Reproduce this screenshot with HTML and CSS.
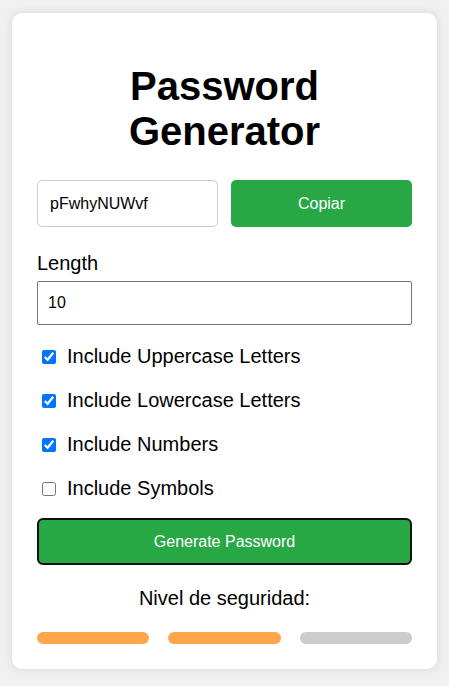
FILE: index.html
```html
<!DOCTYPE html>
<html lang="es">
<head>
<meta charset="utf-8">
<title>Password Generator</title>
<link rel="stylesheet" href="styles.css">
</head>
<body>
<main class="card">
  <h1 class="title">Password Generator</h1>
  <div class="output-row">
    <input class="output" type="text" value="pFwhyNUWvf" readonly>
    <button class="btn copy" type="button">Copiar</button>
  </div>
  <label class="field-label" for="length">Length</label>
  <input class="length" id="length" type="number" value="10">
  <div class="options">
    <label class="option"><input type="checkbox" checked><span>Include Uppercase Letters</span></label>
    <label class="option"><input type="checkbox" checked><span>Include Lowercase Letters</span></label>
    <label class="option"><input type="checkbox" checked><span>Include Numbers</span></label>
    <label class="option"><input type="checkbox"><span>Include Symbols</span></label>
  </div>
  <button class="btn generate" type="button">Generate Password</button>
  <p class="strength-label">Nivel de seguridad:</p>
  <div class="strength">
    <span class="bar on"></span>
    <span class="bar on"></span>
    <span class="bar"></span>
  </div>
</main>
</body>
</html>
```
FILE: styles.css
```css
* { box-sizing: border-box; }
html, body {
  margin: 0;
  background: #f0f0f0;
}
body {
  padding: 13px 12px;
  font-family: "Liberation Sans", Arial, sans-serif;
  color: #000;
}
.card {
  background: #fff;
  border-radius: 10px;
  box-shadow: 0 0 10px rgba(0, 0, 0, 0.1);
  padding: 24px 25px 25px;
  display: flex;
  flex-direction: column;
}
.title {
  font-size: 40px;
  line-height: 45px;
  font-weight: bold;
  text-align: center;
  margin: 27px 0 26px;
}
.output-row {
  display: grid;
  grid-template-columns: minmax(0, 1fr) minmax(0, 1fr);
  gap: 13px;
  height: 47px;
}
.output {
  width: 100%;
  min-width: 0;
  border: 1px solid #ccc;
  border-radius: 5px;
  padding: 0 12px;
  font: 16px "Liberation Sans", Arial, sans-serif;
  color: #000;
  outline: none;
}
.btn {
  border: none;
  border-radius: 5px;
  background: #28a745;
  color: #fff;
  font: 16px "Liberation Sans", Arial, sans-serif;
  cursor: pointer;
}
.copy { width: 100%; }
.field-label {
  font-size: 20px;
  line-height: 23px;
  margin-top: 25px;
}
.length {
  margin-top: 6px;
  height: 44px;
  border: 1px solid #767676;
  border-radius: 2px;
  padding: 0 10px;
  font: 16px "Liberation Sans", Arial, sans-serif;
  color: #000;
}
.options {
  display: flex;
  flex-direction: column;
  gap: 21px;
  margin-top: 20px;
}
.option {
  display: flex;
  align-items: center;
  font-size: 20px;
  line-height: 23px;
}
.option input {
  width: 14px;
  height: 14px;
  margin: 0 11px 0 5px;
}
.generate {
  margin-top: 18px;
  height: 47px;
  border: 2px solid #111;
  border-radius: 6px;
}
.strength-label {
  font-size: 20px;
  line-height: 23px;
  text-align: center;
  margin: 22px 0 0;
}
.strength {
  display: flex;
  gap: 19px;
  margin-top: 22px;
}
.bar {
  flex: 1;
  height: 12px;
  border-radius: 6px;
  background: #ccc;
}
.bar.on { background: #ffa64d; }
```
